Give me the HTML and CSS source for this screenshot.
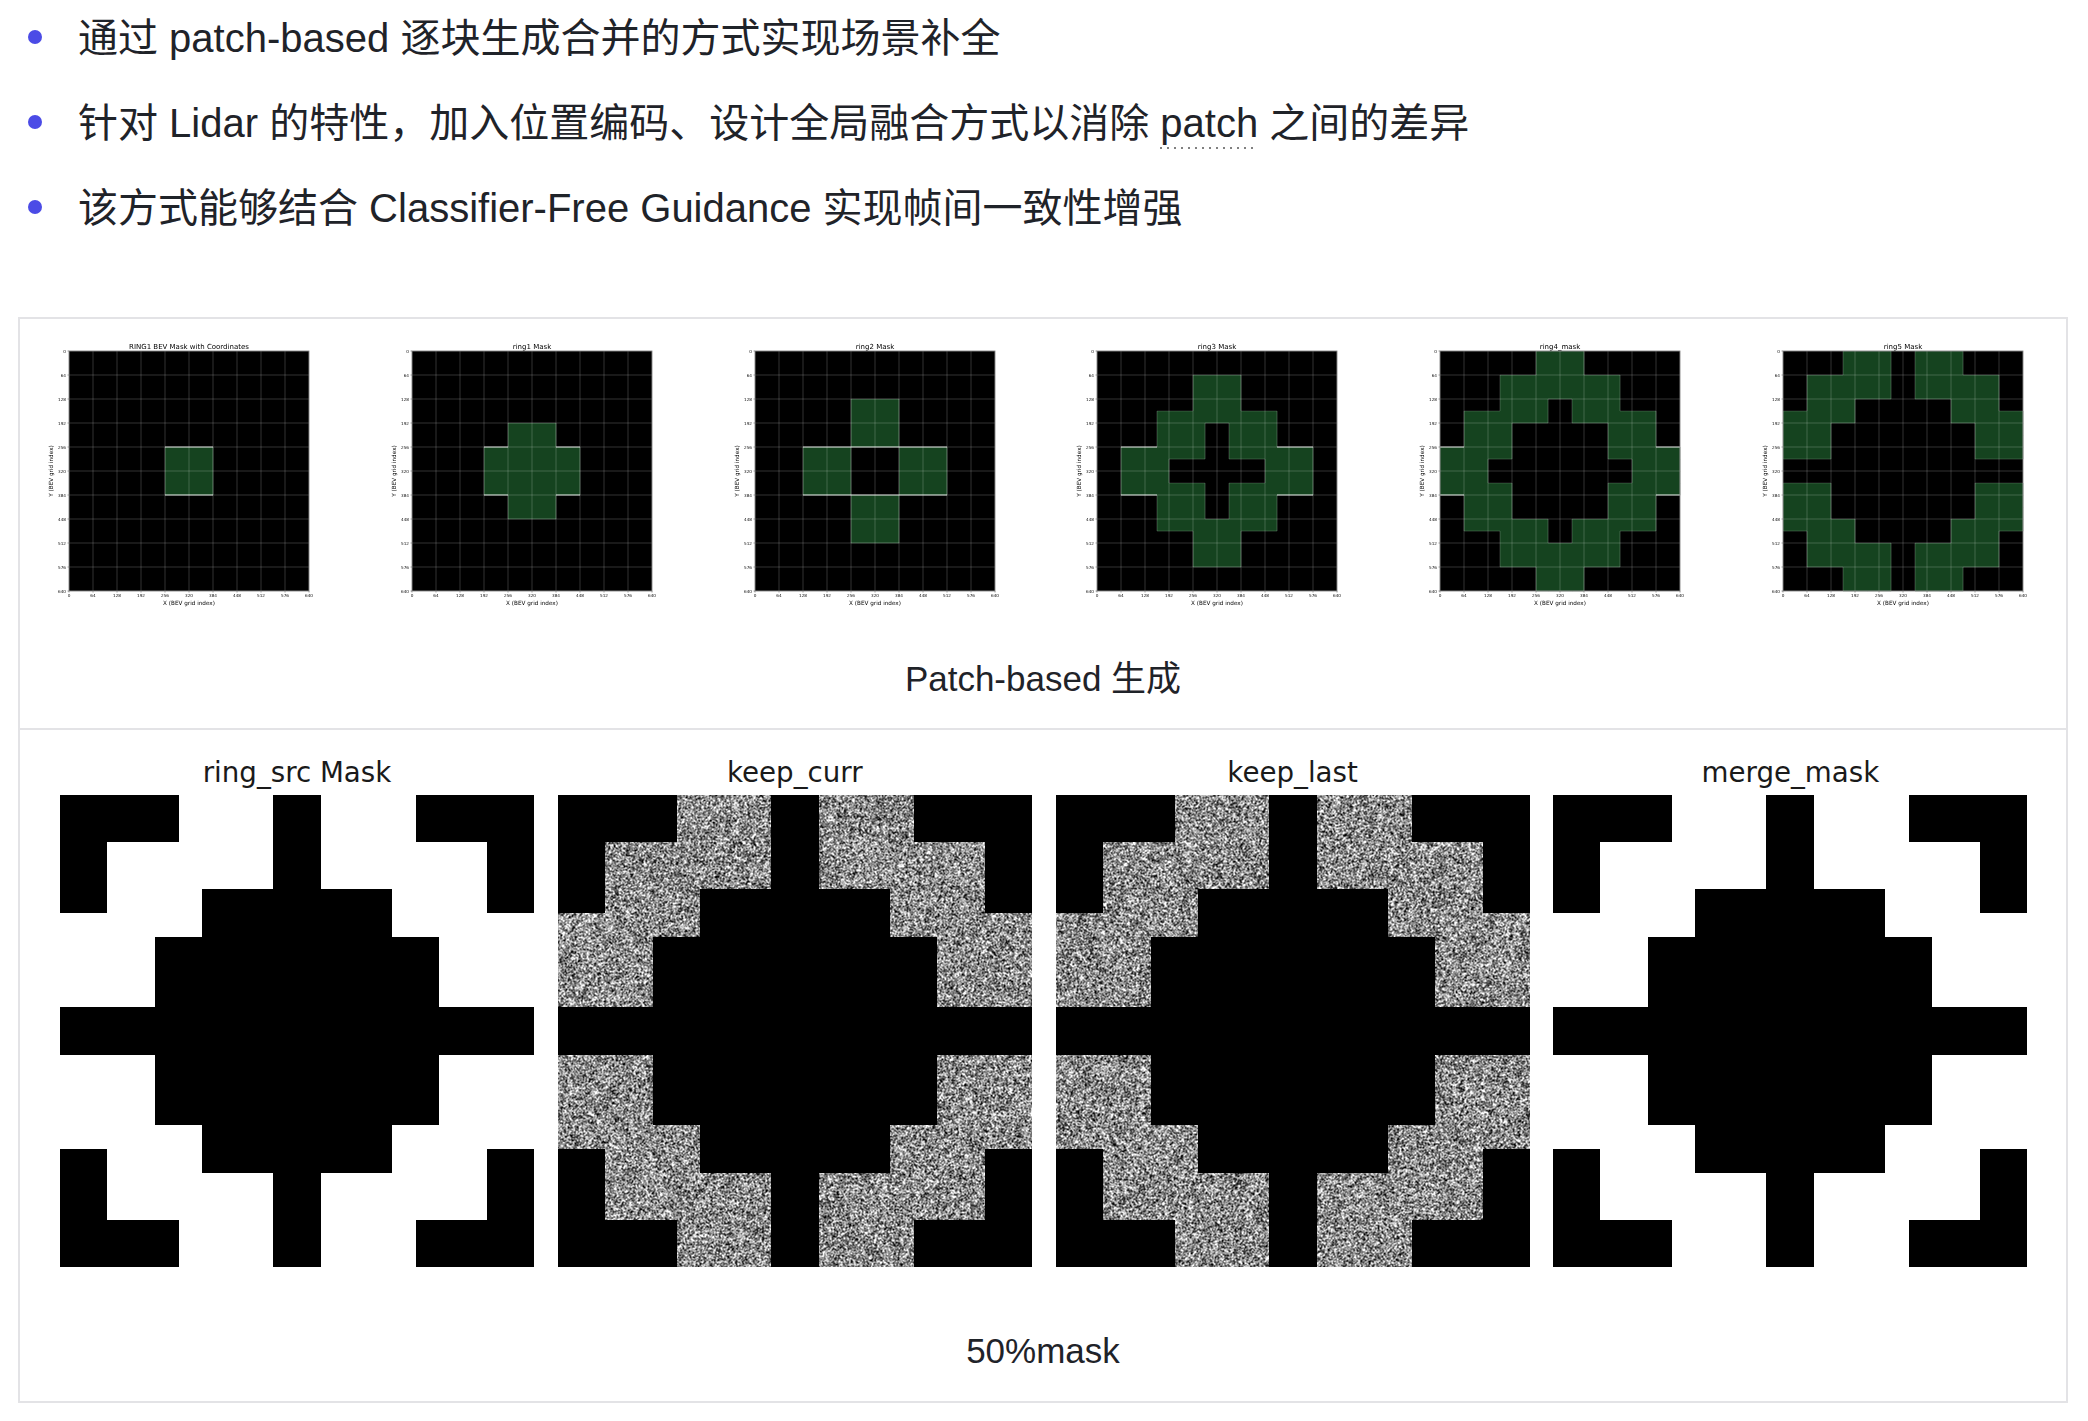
FILE: index.html
```html
<!DOCTYPE html>
<html lang="en">
<head>
    <meta charset="UTF-8">
    <title>Patch-based 场景补全</title>
    <link rel="stylesheet" href="styles.css">
</head>
<body>
    <ul class="notes">
        <li>通过 patch-based 逐块生成合并的方式实现场景补全</li>
        <li>针对 Lidar 的特性，加入位置编码、设计全局融合方式以消除 <span class="spell">patch</span> 之间的差异</li>
        <li>该方式能够结合 Classifier-Free Guidance 实现帧间一致性增强</li>
    </ul>

    <div class="figures">
        <section class="figure">
            <div class="plots">
                <svg class="plot" data-ring="ring1" data-title="RING1 BEV Mask with Coordinates"></svg>
                <svg class="plot" data-ring="ring1b" data-title="ring1 Mask"></svg>
                <svg class="plot" data-ring="ring2" data-title="ring2 Mask"></svg>
                <svg class="plot" data-ring="ring3" data-title="ring3 Mask"></svg>
                <svg class="plot" data-ring="ring4" data-title="ring4_mask"></svg>
                <svg class="plot" data-ring="ring5" data-title="ring5 Mask"></svg>
            </div>
            <p class="caption caption-plots">Patch-based 生成</p>
        </section>
        <section class="figure">
            <div class="masks">
                <figure class="mask">
                    <figcaption>ring_src Mask</figcaption>
                    <canvas width="474" height="472" data-fill="white"></canvas>
                </figure>
                <figure class="mask">
                    <figcaption>keep_curr</figcaption>
                    <canvas width="474" height="472" data-fill="noise" data-seed="11"></canvas>
                </figure>
                <figure class="mask">
                    <figcaption>keep_last</figcaption>
                    <canvas width="474" height="472" data-fill="noise" data-seed="47"></canvas>
                </figure>
                <figure class="mask">
                    <figcaption>merge_mask</figcaption>
                    <canvas width="474" height="472" data-fill="white"></canvas>
                </figure>
            </div>
            <p class="caption caption-masks">50%mask</p>
        </section>
    </div>

    <script src="masks.js"></script>
</body>
</html>
```
FILE: styles.css
```css
* {
    margin: 0;
    padding: 0;
    box-sizing: border-box;
}

body {
    background: #fff;
    color: #1f2329;
    font-family: "Liberation Sans", "Noto Sans CJK SC", sans-serif;
    padding-left: 18px;
    width: 2068px;
}

.notes {
    list-style: none;
    margin-bottom: 73px;
}

.notes li {
    position: relative;
    font-size: 40px;
    line-height: 74px;
    margin-bottom: 11px;
    padding-top: 1px;
    padding-left: 60px;
    height: 74px;
}

.notes li:last-child {
    margin-bottom: 0;
}

.notes li::before {
    content: "";
    position: absolute;
    left: 10px;
    top: 30px;
    width: 14px;
    height: 14px;
    border-radius: 50%;
    background: #4b4be6;
}

.spell {
    padding-bottom: 4px;
    background: repeating-linear-gradient(90deg, #808080 0 2px, transparent 2px 7px) left bottom / 100% 2px no-repeat;
}

.figures {
    border: 2px solid #e3e3e6;
}

.figure + .figure {
    border-top: 2px solid #e3e3e6;
}

.plots {
    display: flex;
    justify-content: space-between;
    padding: 14px 13px 0 19px;
}

.plot {
    width: 300px;
    height: 280px;
    filter: blur(0.4px);
    font-family: "DejaVu Sans", sans-serif;
    fill: #000;
}

.plot .title { font-size: 7px; }
.plot .label { font-size: 5.7px; }
.plot .tick { font-size: 4.2px; fill: #111; }

.caption {
    text-align: center;
    font-size: 35px;
    line-height: 50px;
}

.caption-plots {
    margin-top: 41px;
    padding-bottom: 24px;
}

.caption-masks {
    margin-top: 59px;
    padding-bottom: 25px;
}

.masks {
    display: grid;
    grid-template-columns: repeat(4, 474px);
    gap: 23.8px;
    justify-content: center;
    padding: 26px 0 0 1.4px;
}

.mask figcaption {
    text-align: center;
    font-family: "DejaVu Sans", sans-serif;
    font-size: 27.7px;
    line-height: 34px;
    margin-bottom: 5px;
    color: #1a1a1a;
}

.mask canvas {
    display: block;
    filter: blur(0.4px);
}
```
FILE: masks.js
```js
// top half of each 20x20 mask, the bottom half is the mirror of it
const EMPTY = '....................';
const ARM = '........####........';
const RINGS = {
    ring1: [EMPTY, EMPTY, EMPTY, EMPTY, EMPTY, EMPTY, EMPTY, EMPTY, ARM, ARM],
    ring1b: [EMPTY, EMPTY, EMPTY, EMPTY, EMPTY, EMPTY, ARM, ARM,
        '......########......', '......########......'],
    ring2: [EMPTY, EMPTY, EMPTY, EMPTY, ARM, ARM, ARM, ARM,
        '....####....####....', '....####....####....'],
    ring3: [EMPTY, EMPTY, ARM, ARM, ARM,
        '.....##########.....',
        '.....####..####.....',
        '.....####..####.....',
        '..#######..#######..',
        '..####........####..'],
    ring4: [ARM, ARM,
        '.....##########.....',
        '.....##########.....',
        '.....####..####.....',
        '..#######..#######..',
        '..####........####..',
        '..####........####..',
        '######........######',
        '####............####'],
    ring5: [
        '.....####..####.....',
        '.....####..####.....',
        '..#######..#######..',
        '..#######..#######..',
        '..####........####..',
        '######........######',
        '####............####',
        '####............####',
        '####............####',
        EMPTY]
};

function fullMask(name) {
    const top = RINGS[name];
    return top.concat(top.slice().reverse());
}

function isOn(rows, r, c) {
    return r >= 0 && r < 20 && c >= 0 && c < 20 && rows[r][c] === '#';
}

// small matplotlib style plots
const AX_X = 30, AX_Y = 18, AX_SIZE = 240, CELL = 12;
const TICKS = [0, 64, 128, 192, 256, 320, 384, 448, 512, 576, 640];

function buildPlot(svg) {
    const rows = fullMask(svg.dataset.ring);
    let out = `<rect x="${AX_X}" y="${AX_Y}" width="${AX_SIZE}" height="${AX_SIZE}" fill="#000"/>`;

    for (let r = 0; r < 20; r++) {
        for (let c = 0; c < 20; c++) {
            if (isOn(rows, r, c)) {
                out += `<rect x="${AX_X + c * CELL}" y="${AX_Y + r * CELL}" width="${CELL + 0.2}" height="${CELL + 0.2}" fill="#15431f"/>`;
            }
        }
    }

    TICKS.forEach((t, i) => {
        const p = i * 24;
        out += `<line x1="${AX_X + p}" x2="${AX_X + p}" y1="${AX_Y}" y2="${AX_Y + AX_SIZE}" stroke="#fff" stroke-opacity="0.25" stroke-width="0.8"/>`;
        out += `<line x1="${AX_X}" x2="${AX_X + AX_SIZE}" y1="${AX_Y + p}" y2="${AX_Y + p}" stroke="#fff" stroke-opacity="0.25" stroke-width="0.8"/>`;
        out += `<line x1="${AX_X + p}" x2="${AX_X + p}" y1="${AX_Y + AX_SIZE}" y2="${AX_Y + AX_SIZE + 1.5}" stroke="#444" stroke-width="0.5"/>`;
        out += `<line x1="${AX_X - 1.5}" x2="${AX_X}" y1="${AX_Y + p}" y2="${AX_Y + p}" stroke="#444" stroke-width="0.5"/>`;
        out += `<text class="tick" x="${AX_X + p}" y="${AX_Y + AX_SIZE + 6.2}" text-anchor="middle">${t}</text>`;
        out += `<text class="tick" x="${AX_X - 3}" y="${AX_Y + p + 1.5}" text-anchor="end">${t}</text>`;
    });

    // edges of the mask, the ones on y=256 and y=384 came out brighter in the image
    for (let r = 0; r <= 20; r++) {
        for (let c = 0; c < 20; c++) {
            if (isOn(rows, r - 1, c) !== isOn(rows, r, c)) {
                const bright = r === 8 || r === 12;
                out += `<line x1="${AX_X + c * CELL}" x2="${AX_X + (c + 1) * CELL}" y1="${AX_Y + r * CELL}" y2="${AX_Y + r * CELL}" stroke="#fff" stroke-opacity="${bright ? 0.85 : 0.15}" stroke-width="1"/>`;
            }
        }
    }
    for (let c = 0; c <= 20; c++) {
        for (let r = 0; r < 20; r++) {
            if (isOn(rows, r, c - 1) !== isOn(rows, r, c)) {
                out += `<line x1="${AX_X + c * CELL}" x2="${AX_X + c * CELL}" y1="${AX_Y + r * CELL}" y2="${AX_Y + (r + 1) * CELL}" stroke="#fff" stroke-opacity="0.2" stroke-width="1"/>`;
            }
        }
    }

    out += `<rect x="${AX_X}" y="${AX_Y}" width="${AX_SIZE}" height="${AX_SIZE}" fill="none" stroke="#777" stroke-width="0.8"/>`;
    out += `<text class="title" x="${AX_X + 120}" y="${AX_Y - 2.5}" text-anchor="middle">${svg.dataset.title}</text>`;
    out += `<text class="label" x="${AX_X + 120}" y="${AX_Y + AX_SIZE + 13.5}" text-anchor="middle">X (BEV grid index)</text>`;
    out += `<text class="label" transform="translate(${AX_X - 16} ${AX_Y + 120}) rotate(-90)" text-anchor="middle">Y (BEV grid index)</text>`;

    svg.setAttribute('viewBox', '0 0 300 280');
    svg.innerHTML = out;
}

function seededRandom(seed) {
    return function () {
        seed = (seed + 0x6D2B79F5) | 0;
        let t = Math.imul(seed ^ (seed >>> 15), 1 | seed);
        t = (t + Math.imul(t ^ (t >>> 7), 61 | t)) ^ t;
        return ((t ^ (t >>> 14)) >>> 0) / 4294967296;
    };
}

// grey blotches: white noise through a 2x2 box, then the contrast pushed back up
function noiseTile(w, h, seed) {
    const rand = seededRandom(seed);
    const raw = new Float32Array((w + 1) * (h + 1));
    for (let i = 0; i < raw.length; i++) raw[i] = rand();

    const tile = document.createElement('canvas');
    tile.width = w;
    tile.height = h;
    const ctx = tile.getContext('2d');
    const img = ctx.createImageData(w, h);
    for (let y = 0; y < h; y++) {
        for (let x = 0; x < w; x++) {
            const row = y * (w + 1) + x;
            const sum = raw[row] + raw[row + 1] + raw[row + w + 1] + raw[row + w + 2];
            const v = Math.max(0, Math.min(255, 140 + (sum / 4 - 0.5) * 350));
            const i = (y * w + x) * 4;
            img.data[i] = img.data[i + 1] = img.data[i + 2] = v;
            img.data[i + 3] = 255;
        }
    }
    ctx.putImageData(img, 0, 0);
    return tile;
}

// big masks: black background, the ring5 cells white or noisy
function drawMask(canvas) {
    const ctx = canvas.getContext('2d');
    const w = canvas.width, h = canvas.height;
    const rows = fullMask('ring5');

    ctx.fillStyle = '#000';
    ctx.fillRect(0, 0, w, h);

    ctx.save();
    ctx.beginPath();
    for (let r = 0; r < 20; r++) {
        for (let c = 0; c < 20; c++) {
            if (isOn(rows, r, c)) {
                const x0 = Math.round(c * w / 20), x1 = Math.round((c + 1) * w / 20);
                const y0 = Math.round(r * h / 20), y1 = Math.round((r + 1) * h / 20);
                ctx.rect(x0, y0, x1 - x0, y1 - y0);
            }
        }
    }
    ctx.clip();
    if (canvas.dataset.fill === 'white') {
        ctx.fillStyle = '#fff';
        ctx.fillRect(0, 0, w, h);
    } else {
        ctx.drawImage(noiseTile(w, h, Number(canvas.dataset.seed)), 0, 0);
    }
    ctx.restore();
}

document.querySelectorAll('.plot').forEach(buildPlot);
document.querySelectorAll('.mask canvas').forEach(drawMask);
```
